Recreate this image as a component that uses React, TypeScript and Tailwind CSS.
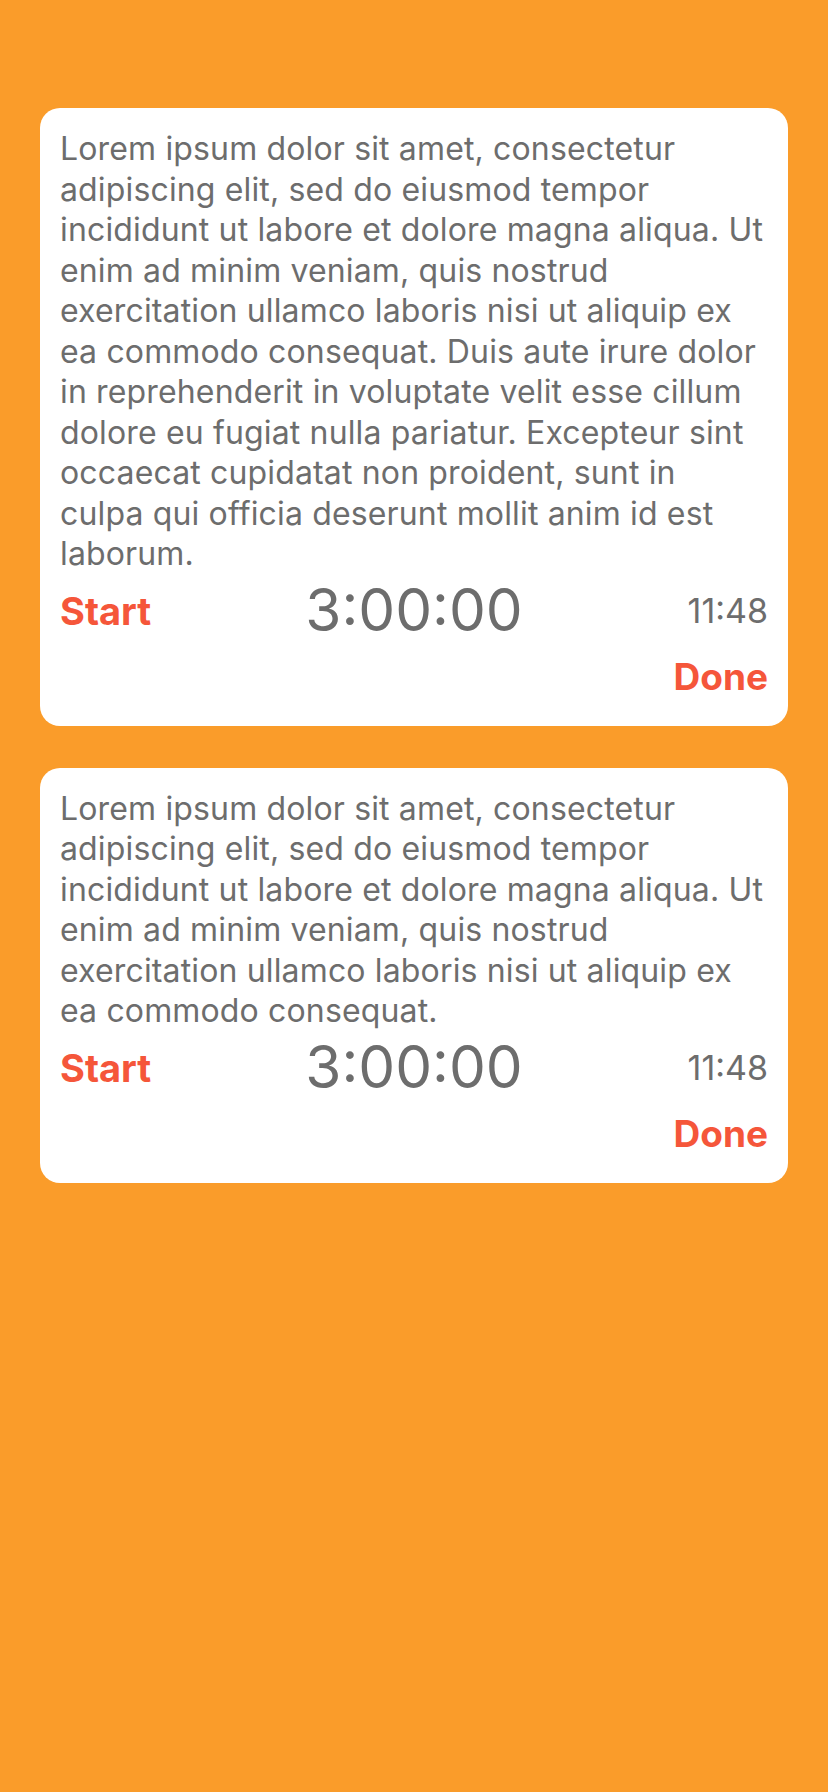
import React from 'react';

interface Task {
  id: number;
  text: string;
  elapsed: string;
  time: string;
}

const tasks: Task[] = [
  {
    id: 1,
    text: 'Lorem ipsum dolor sit amet, consectetur adipiscing elit, sed do eiusmod tempor incididunt ut labore et dolore magna aliqua. Ut enim ad minim veniam, quis nostrud exercitation ullamco laboris nisi ut aliquip ex ea commodo consequat. Duis aute irure dolor in reprehenderit in voluptate velit esse cillum dolore eu fugiat nulla pariatur. Excepteur sint occaecat cupidatat non proident, sunt in culpa qui officia deserunt mollit anim id est laborum.',
    elapsed: '3:00:00',
    time: '11:48'
  },
  {
    id: 2,
    text: 'Lorem ipsum dolor sit amet, consectetur adipiscing elit, sed do eiusmod tempor incididunt ut labore et dolore magna aliqua. Ut enim ad minim veniam, quis nostrud exercitation ullamco laboris nisi ut aliquip ex ea commodo consequat.',
    elapsed: '3:00:00',
    time: '11:48'
  }
];

const TaskCard: React.FC<{ task: Task }> = ({ task }) => {
  return (
    <div className="bg-white rounded-[20px] px-[20px] pt-[21px] pb-[29px]">
      <p className="text-[32px] leading-[40.5px] tracking-[0.15px] text-[#6d6d6d]">
        {task.text}
      </p>

      {/* Timer row */}
      <div className="relative flex items-center justify-between h-[72px]">
        <button className="text-[38px] font-bold text-[#f5563a] leading-none">Start</button>
        <span className="absolute left-1/2 -translate-x-1/2 text-[58.5px] leading-none text-[#6d6d6d]">
          {task.elapsed}
        </span>
        <span className="text-[34px] leading-none text-[#6d6d6d]">{task.time}</span>
      </div>

      <div className="flex justify-end mt-[9px]">
        <button className="text-[37px] font-bold text-[#f5563a] leading-[41px]">Done</button>
      </div>
    </div>
  );
};

const App: React.FC = () => {
  return (
    <div className="min-h-screen bg-[#fa9c2a] px-[40px] pt-[108px] font-['Inter',sans-serif]">
      <div className="flex flex-col gap-[42px]">
        {tasks.map(task => (
          <TaskCard key={task.id} task={task} />
        ))}
      </div>
    </div>
  );
};

export default App;
